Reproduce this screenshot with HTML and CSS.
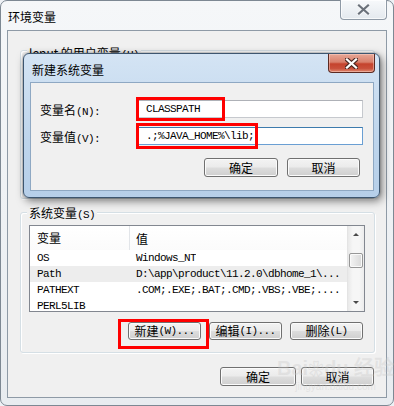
FILE: index.html
```html
<!DOCTYPE html>
<html lang="zh-CN">
<head>
<meta charset="utf-8">
<title>环境变量</title>
<link rel="stylesheet" href="styles.css">
</head>
<body>
<div class="win">
  <div class="titlebar">
    <span class="title">环境变量</span>
    <div class="close-out">
      <svg width="13" height="11" viewBox="0 0 13 11"><path d="M2 1.5 L11 9.5 M11 1.5 L2 9.5" stroke="#f4f6f8" stroke-width="4.2" stroke-linecap="round"/><path d="M2 1.5 L11 9.5 M11 1.5 L2 9.5" stroke="#6b717a" stroke-width="2.2" stroke-linecap="square"/></svg>
    </div>
  </div>
  <div class="client">
    <div class="group user">
      <span class="legend">lenut 的用户变量<span class="hw">(U)</span></span>
    </div>
    <div class="group sys">
      <span class="legend">系统变量<span class="hw">(S)</span></span>
      <div class="list">
        <div class="table">
          <div class="hdr"><div class="c1">变量</div><div class="c2">值</div></div>
          <div class="row"><div class="c1 hw">OS</div><div class="c2 hw">Windows_NT</div></div>
          <div class="row alt"><div class="c1 hw">Path</div><div class="c2 hw">D:\app\product\11.2.0\dbhome_1\...</div></div>
          <div class="row"><div class="c1 hw">PATHEXT</div><div class="c2 hw">.COM;.EXE;.BAT;.CMD;.VBS;.VBE;....</div></div>
          <div class="row"><div class="c1 hw">PERL5LIB</div><div class="c2 hw"></div></div>
        </div>
        <div class="vscroll">
          <div class="sbtn"><span class="tri up"></span></div>
          <div class="thumb"></div>
          <div class="track"></div>
          <div class="sbtn"><span class="tri down"></span></div>
        </div>
      </div>
      <div class="btnrow">
        <div class="btn w73 marked">新建<span class="hw">(W)...</span><span class="mark m3"></span></div>
        <div class="btn w73">编辑<span class="hw">(I)...</span></div>
        <div class="btn w73">删除<span class="hw">(L)</span></div>
      </div>
    </div>
    <div class="okrow">
      <div class="btn ok">确定</div>
      <div class="btn cancel">取消</div>
    </div>
  </div>

  <div class="watermark"><span class="wm1">Bai<span class="paw">❀</span>du 经验</span><span class="wm2">jingyan.baidu.com</span></div>

  <div class="dlg">
    <div class="dtitlebar">
      <span class="dtitle">新建系统变量</span>
      <div class="close-red">
        <svg width="13" height="11" viewBox="0 0 13 11"><path d="M2 1.5 L11 9.5 M11 1.5 L2 9.5" stroke="#4a2720" stroke-width="4.4" stroke-linecap="round"/><path d="M2 1.5 L11 9.5 M11 1.5 L2 9.5" stroke="#ffffff" stroke-width="2.3" stroke-linecap="square"/></svg>
      </div>
    </div>
    <div class="dclient">
      <div class="frow first">
        <span class="lbl">变量名<span class="hw">(N):</span></span>
        <div class="field">
          <div class="input hw">CLASSPATH</div>
          <span class="mark m1"></span>
        </div>
      </div>
      <div class="frow second">
        <span class="lbl">变量值<span class="hw">(V):</span></span>
        <div class="field">
          <div class="input focus hw">.;%JAVA_HOME%\lib;</div>
          <span class="mark m2"></span>
        </div>
      </div>
      <div class="dbtns">
        <div class="btn d1">确定</div>
        <div class="btn d2">取消</div>
      </div>
    </div>
  </div>
</div>
</body>
</html>
```

FILE: styles.css
```css
* { box-sizing: border-box; }

body {
  margin: 0;
  background: #eef1f5;
  font-family: "Noto Sans CJK SC", "Liberation Sans", sans-serif;
  font-size: 12px;
  color: #000;
}

.hw {
  font-family: "Liberation Mono", "Noto Sans CJK SC", monospace;
  font-size: 11px;
  letter-spacing: -0.6px;
}

.win {
  position: relative;
  width: 394px;
  height: 406px;
  border: 1px solid #7d8893;
  border-radius: 7px;
  background: linear-gradient(#f5f7f9, #e8ecf0);
  padding: 0 6px 7px 6px;
  display: flex;
  flex-direction: column;
}

.titlebar {
  height: 29px;
  display: flex;
  align-items: center;
  padding-left: 1px;
}

.title {
  font-size: 12px;
  line-height: 13px;
  margin-top: 1px;
}

.close-out {
  margin-left: auto;
  align-self: flex-start;
  margin-top: -1px;
  width: 47px;
  height: 20px;
  border: 1px solid #8f9aa6;
  border-top: none;
  border-radius: 0 0 4px 4px;
  background: linear-gradient(#f7f9fb, #e4e9ee);
  box-shadow: inset 0 0 0 1px rgba(255,255,255,0.7);
  display: flex;
  align-items: center;
  justify-content: center;
}

.client {
  flex: 1;
  border: 1px solid #8e9aa6;
  background: #f0f0f0;
  display: flex;
  flex-direction: column;
  padding: 19px 11px 0 12px;
}

.group {
  position: relative;
  border: 1px solid #d5dfe5;
  border-radius: 3px;
  box-shadow: inset 1px 1px 0 #fff, 1px 1px 0 #fff;
}

.group.user { height: 149px; }

.group.user .legend { top: -5px; }

.group.sys {
  margin-top: 13px;
  height: 141px;
  padding: 12px 9px 0 8px;
}

.legend {
  position: absolute;
  top: -7px;
  left: 6px;
  padding: 0 2px;
  background: #f0f0f0;
  line-height: 13px;
  white-space: nowrap;
}

.list {
  height: 87px;
  border: 1px solid #828790;
  background: #fff;
  display: flex;
  overflow: hidden;
}

.table {
  flex: 1;
  overflow: hidden;
}

.hdr {
  height: 24px;
  display: flex;
  align-items: center;
  background: linear-gradient(#ffffff, #fbfbfb);
}

.hdr .c1 {
  width: 100px;
  height: 24px;
  line-height: 24px;
  padding-left: 7px;
  border-right: 1px solid #e2e5e9;
}

.hdr .c2 {
  padding-left: 6px;
}

.row {
  height: 16px;
  display: flex;
  align-items: center;
  white-space: nowrap;
}

.row.alt { background: #ededed; }

.row .c1 {
  width: 100px;
  padding-left: 7px;
}

.row .c2 {
  padding-left: 6px;
  overflow: hidden;
}

.vscroll {
  width: 17px;
  display: flex;
  flex-direction: column;
  background: linear-gradient(90deg, #e9e9e9, #f6f6f6 30%, #f6f6f6 70%, #ececec);
  border-left: 1px solid #e4e4e4;
}

.sbtn {
  height: 17px;
  display: flex;
  align-items: center;
  justify-content: center;
}

.tri {
  width: 0;
  height: 0;
  border-left: 3px solid transparent;
  border-right: 3px solid transparent;
}

.tri.up { border-bottom: 3px solid #4a4a4a; }
.tri.down { border-top: 3px solid #4a4a4a; }

.thumb {
  margin: 10px 1px 0 1px;
  height: 15px;
  border: 1px solid #979797;
  border-radius: 2px;
  background: linear-gradient(90deg, #f4f4f4, #e6e6e6 50%, #d9d9d9);
  box-shadow: inset 0 0 0 1px #fafafa;
}

.track { flex: 1; }

.btnrow {
  margin-top: 10px;
  display: flex;
  justify-content: flex-end;
  gap: 8px;
  padding-right: 2px;
}

.btn {
  position: relative;
  height: 18px;
  border: 1px solid #707070;
  border-radius: 3px;
  background: linear-gradient(#f3f3f3 0%, #ebebeb 48%, #dddddd 52%, #cfcfcf 100%);
  box-shadow: inset 0 0 0 1px #fbfbfb;
  display: flex;
  align-items: center;
  justify-content: center;
  line-height: 14px;
  white-space: nowrap;
}

.btn.w73 { width: 73px; }

.okrow {
  margin-top: 14px;
  display: flex;
  justify-content: flex-end;
  gap: 5px;
  padding-right: 1px;
}

.btn.ok { width: 76px; height: 19px; }
.btn.cancel { width: 73px; height: 19px; }

.mark {
  position: absolute;
  border: 3px solid #ff0000;
  pointer-events: none;
}

.mark.m3 {
  left: -11px;
  top: -4px;
  width: 91px;
  height: 30px;
}

/* inner dialog, over the main window */
.dlg {
  position: absolute;
  left: 22px;
  top: 52px;
  width: 357px;
  height: 145px;
  border: 1px solid #3d5670;
  border-radius: 6px;
  background: linear-gradient(#d4e4f4, #bed5ec 60%, #b6cfe9);
  padding: 0 5px 6px 6px;
  display: flex;
  flex-direction: column;
  box-shadow: 2px 3px 9px rgba(0,0,0,0.5), 0 0 3px rgba(0,0,0,0.3);
}

.dtitlebar {
  height: 28px;
  display: flex;
  align-items: flex-start;
}

.dtitle {
  margin-left: 2px;
  margin-top: 9px;
  line-height: 13px;
}

.close-red {
  margin-left: auto;
  margin-right: -1px;
  width: 47px;
  height: 19px;
  border: 1px solid #5b2a22;
  border-top: none;
  border-radius: 0 0 4px 4px;
  background: linear-gradient(#e7a796 0%, #d9806c 45%, #c5432d 55%, #c9503b 80%, #e08a70 100%);
  box-shadow: inset 0 0 0 1px rgba(255,220,210,0.45);
  display: flex;
  align-items: center;
  justify-content: center;
}

.dclient {
  flex: 1;
  border: 1px solid #8ea8c3;
  background: #f0f0f0;
  padding: 0 0 0 9px;
  display: flex;
  flex-direction: column;
}

.frow {
  display: flex;
  align-items: center;
}

.frow.first { margin-top: 17px; }
.frow.second { margin-top: 9px; }

.lbl {
  width: 97px;
  white-space: nowrap;
}

.field {
  position: relative;
}

.input {
  width: 226px;
  height: 18px;
  border: 1px solid #c6c9ce;
  border-top-color: #aeb1b7;
  background: #fff;
  padding-left: 8px;
  line-height: 16px;
  white-space: nowrap;
}

.input.focus {
  border-color: #6a9fd3;
  border-top-color: #3d7bad;
}

.mark.m1 {
  left: -1px;
  top: -3px;
  width: 89px;
  height: 24px;
}

.mark.m2 {
  left: -1px;
  top: -4px;
  width: 122px;
  height: 26px;
}

.dbtns {
  margin-top: 13px;
  display: flex;
  justify-content: flex-end;
  gap: 9px;
  padding-right: 13px;
}

.btn.d1 { width: 74px; height: 19px; }
.btn.d2 { width: 73px; height: 19px; }

.watermark {
  position: absolute;
  left: 276px;
  top: 356px;
  display: flex;
  flex-direction: column;
  align-items: center;
  color: rgba(200,200,200,0.35);
  pointer-events: none;
}

.wm1 {
  font-family: "Liberation Sans", sans-serif;
  font-size: 20px;
  font-weight: bold;
  line-height: 22px;
  white-space: nowrap;
}

.paw { font-size: 16px; }

.wm2 {
  font-family: "Liberation Sans", sans-serif;
  font-size: 10px;
  line-height: 12px;
}
```
